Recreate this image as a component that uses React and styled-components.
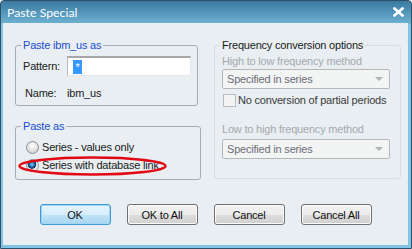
import styled, { createGlobalStyle } from "styled-components";

const GlobalStyle = createGlobalStyle`
  html, body {
    margin: 0;
    padding: 0;
    background: #ffffff;
  }
  body {
    font-family: "Liberation Sans", Arial, sans-serif;
    font-size: 11px;
    letter-spacing: -0.2px;
  }
`;

const Frame = styled.div`
  width: 412px;
  height: 249px;
  box-sizing: border-box;
  display: flex;
  flex-direction: column;
  border: 1px solid #2c5068;
  border-radius: 4px 4px 0 0;
  padding: 0 3px 3px 2px;
  background: linear-gradient(
    to bottom,
    #3b7ba2 0px,
    #5596bb 12px,
    #6cb0d0 22px,
    #82c4e2 23px,
    #82c4e2 100%
  );
`;

const TitleBar = styled.div`
  height: 22px;
  display: flex;
  align-items: center;
  justify-content: space-between;
  padding: 0 4px 0 4px;
`;

const Title = styled.span`
  color: #ffffff;
  font-family: Lato, "Liberation Sans", sans-serif;
  font-size: 12.3px;
  letter-spacing: 0;
  margin-top: 1px;
`;

const CloseIcon = () => (
  <svg width="11" height="10" viewBox="0 0 11 10">
    <path
      d="M1.5 1.5 L9.5 8.5 M9.5 1.5 L1.5 8.5"
      stroke="#ffffff"
      strokeWidth="2.6"
      strokeLinecap="square"
    />
  </svg>
);

const Client = styled.div`
  flex: 1;
  background: #e8eef1;
  display: flex;
  flex-direction: column;
  padding: 16px 0 0 12px;
`;

const Columns = styled.div`
  display: flex;
  align-items: flex-start;
`;

const LeftColumn = styled.div`
  width: 186px;
  display: flex;
  flex-direction: column;
  gap: 14px;
`;

const Group = styled.fieldset`
  margin: 0;
  padding: 0;
  min-width: 0;
  box-sizing: border-box;
  width: ${(p) => p.$w}px;
  border: 1px solid ${(p) => (p.$soft ? "#d3dde3" : "#a8adb1")};
  border-radius: 3px;
`;

const Legend = styled.legend`
  margin: 0 auto 0 5px;
  padding: 0 2px;
  line-height: 13px;
  color: ${(p) => (p.$dark ? "#1a1a1a" : "#1b4fce")};
`;

const GroupBody = styled.div`
  padding: ${(p) => p.$pad};
`;

const PatternRow = styled.div`
  display: flex;
  align-items: center;
  height: 20px;
`;

const Label = styled.span`
  color: #1a1a1a;
  width: ${(p) => p.$w || "auto"};
  padding-left: ${(p) => p.$indent || 0}px;
`;

const TextBox = styled.div`
  width: 124px;
  height: 20px;
  box-sizing: border-box;
  background: #ffffff;
  border: 1px solid #e3e9ef;
  border-top: 2px solid #a7a7a7;
  border-left: 1px solid #b9b9b9;
  display: flex;
  align-items: center;
  padding-left: 5px;
`;

const Selected = styled.span`
  display: inline-block;
  background: #3399ff;
  color: #ffffff;
  width: 9px;
  height: 14px;
  line-height: 14px;
  text-align: center;
  margin-top: 1px;
`;

const NameRow = styled.div`
  display: flex;
  align-items: center;
  height: 13px;
  margin-top: 10px;
`;

const RadioRow = styled.label`
  position: relative;
  display: flex;
  align-items: center;
  height: 16px;
  gap: 3px;
  color: #1a1a1a;
  margin-top: ${(p) => p.$mt || 0}px;
`;

const RadioDot = styled.span`
  width: 13px;
  height: 13px;
  box-sizing: border-box;
  border-radius: 50%;
  border: 1px solid #8e9193;
  background: ${(p) =>
    p.$on
      ? "radial-gradient(circle at 45% 40%, #86d2f7 0, #1f6fae 2.5px, #0b2f5c 4px, #e6e6e6 4.6px, #f4f4f4 100%)"
      : "radial-gradient(circle at 50% 35%, #ffffff 0, #e9e9e9 40%, #c9c9c9 100%)"};
  flex-shrink: 0;
`;

const Annotation = styled.svg`
  position: absolute;
  left: -8px;
  top: -1px;
  pointer-events: none;
  overflow: visible;
`;

const RightGroupWrap = styled.div`
  margin-left: 13px;
`;

const Muted = styled.div`
  color: #a4aaae;
  line-height: 13px;
  margin-top: ${(p) => p.$mt}px;
`;

const Select = styled.div`
  width: 168px;
  height: 20px;
  box-sizing: border-box;
  border: 1px solid #b4b8bb;
  border-radius: 2px;
  background: #f3f4f4;
  display: flex;
  align-items: center;
  justify-content: space-between;
  padding: 0 5px 0 4px;
  color: #6c6c74;
  margin-top: ${(p) => p.$mt}px;
`;

const Arrow = styled.span`
  width: 0;
  height: 0;
  border-left: 4px solid transparent;
  border-right: 4px solid transparent;
  border-top: 4px solid #b0b4b7;
  margin-right: 1px;
`;

const CheckRow = styled.div`
  display: flex;
  align-items: center;
  gap: 2px;
  height: 14px;
  margin-top: 4px;
  color: #3c3c3c;
`;

const CheckBox = styled.span`
  width: 13px;
  height: 13px;
  box-sizing: border-box;
  border: 1px solid #b9bcbe;
  background: #f4f4f4;
  margin-left: 1px;
`;

const ButtonRow = styled.div`
  display: flex;
  justify-content: center;
  gap: 16px;
  margin-top: 24px;
  padding-right: 12px;
`;

const Button = styled.button`
  width: 71px;
  height: 21px;
  box-sizing: border-box;
  font-family: "Liberation Sans", Arial, sans-serif;
  font-size: 11px;
  letter-spacing: -0.2px;
  color: #111111;
  padding: 0;
  border-radius: 3px;
  border: 1px solid ${(p) => (p.$focus ? "#3c9ad6" : "#707070")};
  background: ${(p) =>
    p.$focus
      ? "linear-gradient(to bottom, #e5f4fc 0%, #d7eefb 50%, #bfe3f7 51%, #a9d6f0 100%)"
      : "linear-gradient(to bottom, #f2f2f2 0%, #ebebeb 50%, #dddddd 51%, #cfcfcf 100%)"};
  box-shadow: inset 0 0 0 1px ${(p) => (p.$focus ? "#9fd6f3" : "#fbfbfb")};
`;

export default function App() {
  return (
    <>
      <GlobalStyle />
      <Frame>
        <TitleBar>
          <Title>Paste Special</Title>
          <CloseIcon />
        </TitleBar>
        <Client>
          <Columns>
            <LeftColumn>
              <Group $w={183}>
                <Legend>Paste ibm_us as</Legend>
                <GroupBody $pad="4px 6px 6px 7px">
                  <PatternRow>
                    <Label $w="44px">Pattern:</Label>
                    <TextBox>
                      <Selected>*</Selected>
                    </TextBox>
                  </PatternRow>
                  <NameRow>
                    <Label $w="42px" $indent={2}>
                      Name:
                    </Label>
                    <Label>ibm_us</Label>
                  </NameRow>
                </GroupBody>
              </Group>
              <Group $w={186}>
                <Legend>Paste as</Legend>
                <GroupBody $pad="6px 6px 6px 10px">
                  <RadioRow>
                    <RadioDot />
                    Series - values only
                  </RadioRow>
                  <RadioRow $mt={2}>
                    <RadioDot $on />
                    Series with database link
                    <Annotation width="149" height="20" viewBox="0 0 149 20">
                      <ellipse
                        cx="74.5"
                        cy="10"
                        rx="73"
                        ry="8.5"
                        fill="none"
                        stroke="#e30613"
                        strokeWidth="2.5"
                      />
                    </Annotation>
                  </RadioRow>
                </GroupBody>
              </Group>
            </LeftColumn>
            <RightGroupWrap>
              <Group $w={187} $soft>
                <Legend $dark>Frequency conversion options</Legend>
                <GroupBody $pad="0 6px 19px 7px">
                  <Muted $mt={3}>High to low frequency method</Muted>
                  <Select $mt={1}>
                    Specified in series
                    <Arrow />
                  </Select>
                  <CheckRow>
                    <CheckBox />
                    No conversion of partial periods
                  </CheckRow>
                  <Muted $mt={16}>Low to high frequency method</Muted>
                  <Select $mt={3}>
                    Specified in series
                    <Arrow />
                  </Select>
                </GroupBody>
              </Group>
            </RightGroupWrap>
          </Columns>
          <ButtonRow>
            <Button $focus>OK</Button>
            <Button>OK to All</Button>
            <Button>Cancel</Button>
            <Button>Cancel All</Button>
          </ButtonRow>
        </Client>
      </Frame>
    </>
  );
}
